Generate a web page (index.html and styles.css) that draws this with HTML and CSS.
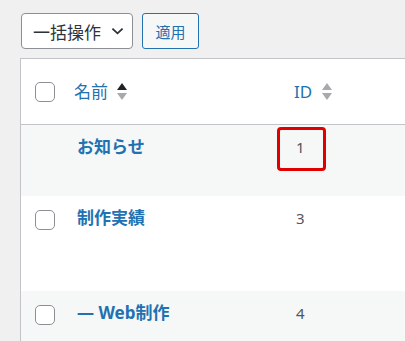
FILE: index.html
```html
<!DOCTYPE html>
<html lang="ja">
<head>
  <meta charset="UTF-8" />
  <title>カテゴリー</title>
  <link rel="stylesheet" href="styles.css">
</head>
<body>
  <div class="tablenav">
    <div class="select">
      <span>一括操作</span>
      <svg class="chevron" viewBox="0 0 14 8"><path d="M1.5 1.5 7 6.5l5.5-5"/></svg>
    </div>
    <button class="apply">適用</button>
  </div>

  <table class="list">
    <thead>
      <tr>
        <th class="check"><span class="box"></span></th>
        <th class="name">
          <a href="#">名前</a>
          <svg class="sort" viewBox="0 0 10 18"><path class="up on" d="M5 0 10 7H0z"/><path class="down" d="M0 10h10l-5 7z"/></svg>
        </th>
        <th class="id">
          <a href="#">ID</a>
          <svg class="sort" viewBox="0 0 10 18"><path class="up" d="M5 0 10 7H0z"/><path class="down" d="M0 10h10l-5 7z"/></svg>
        </th>
      </tr>
    </thead>
    <tbody>
      <tr class="alt short">
        <td class="check"></td>
        <td class="name"><a href="#">お知らせ</a></td>
        <td class="id"><span class="mark"></span>1</td>
      </tr>
      <tr class="tall">
        <td class="check"><span class="box"></span></td>
        <td class="name"><a href="#">制作実績</a></td>
        <td class="id">3</td>
      </tr>
      <tr class="alt">
        <td class="check"><span class="box"></span></td>
        <td class="name"><a href="#">— Web制作</a></td>
        <td class="id">4</td>
      </tr>
    </tbody>
  </table>
</body>
</html>
```

FILE: styles.css
```css
body {
  margin: 0;
  background: #f0f0f1;
  font-family: "Noto Sans", "Noto Sans CJK JP", sans-serif;
  color: #50575e;
  overflow: hidden;
}
.tablenav {
  display: flex;
  gap: 9px;
  padding: 13px 0 0 21px;
  height: 36px;
}
.select {
  box-sizing: border-box;
  width: 112px;
  height: 36px;
  display: flex;
  align-items: center;
  gap: 10px;
  padding-left: 11px;
  background: #fff;
  border: 1px solid #8c8f94;
  border-radius: 4px;
  color: #2c3338;
  font-size: 17px;
}
.chevron {
  width: 13px;
  height: 8px;
  fill: none;
  stroke: #2c3338;
  stroke-width: 2;
}
.apply {
  box-sizing: border-box;
  width: 57px;
  height: 36px;
  padding: 0;
  background: #f6f7f7;
  border: 1px solid #2271b1;
  border-radius: 3px;
  color: #2271b1;
  font-family: inherit;
  font-size: 15px;
}

/* 一覧テーブル */
.list {
  margin: 9px 0 0 20px;
  width: 500px;
  table-layout: fixed;
  border-collapse: collapse;
  background: #fff;
  border-top: 1px solid #c3c4c7;
  border-left: 1px solid #c3c4c7;
  font-size: 17px;
  line-height: 24px;
}
.list th,
.list td {
  padding: 0;
  text-align: left;
  font-weight: normal;
}
.list thead tr {
  height: 66px;
  border-bottom: 1px solid #c3c4c7;
}
.list th {
  vertical-align: middle;
}
.list a {
  color: #2271b1;
  text-decoration: none;
}
.list td {
  vertical-align: top;
  padding-top: 10px;
}
.list td.check {
  padding-top: 14px;
}
.list .check {
  width: 30px;
  padding-left: 14px;
}
.list .name {
  width: 207px;
  padding-left: 12px;
}
.list th.name {
  width: 210px;
  padding-left: 9px;
}
.list .id {
  position: relative;
  padding-left: 12px;
}
.list th.id {
  padding-left: 10px;
}
td.name a {
  font-weight: bold;
}
td.id {
  font-size: 15px;
}
th a {
  vertical-align: middle;
}
.sort {
  width: 10px;
  height: 18px;
  margin-left: 5px;
  vertical-align: middle;
  fill: #a7aaad;
}
.sort .on {
  fill: #1d2327;
}
.box {
  display: block;
  box-sizing: border-box;
  width: 20px;
  height: 20px;
  background: #fff;
  border: 1px solid #8c8f94;
  border-radius: 5px;
}
tr.alt {
  background: #f6f7f7;
}
tr.short {
  height: 71px;
}
tr.tall {
  height: 95px;
}
tr.alt:last-child {
  height: 60px;
}

/* 注目枠 */
.mark {
  position: absolute;
  left: -7px;
  top: 2px;
  width: 49px;
  height: 44px;
  box-sizing: border-box;
  border: 3px solid #e00000;
  border-radius: 4px;
}
```
